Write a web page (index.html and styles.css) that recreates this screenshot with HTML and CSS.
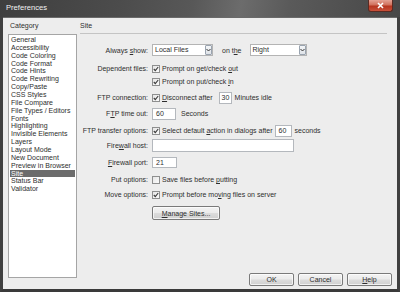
FILE: index.html
```html
<!DOCTYPE html>
<html>
<head>
<meta charset="utf-8">
<link rel="stylesheet" href="styles.css">
</head>
<body>
<div class="window">
  <div class="titlebar">
    <span class="title">Preferences</span>
    <span class="close"><svg width="9" height="7" viewBox="0 0 9 7"><path d="M2 1 L7 6 M7 1 L2 6" stroke="#fff" stroke-width="1.6" fill="none"/></svg></span>
  </div>
  <div class="client">
    <div class="left">
      <div class="caption">Category</div>
      <ul class="list">
        <li>General</li>
        <li>Accessibility</li>
        <li>Code Coloring</li>
        <li>Code Format</li>
        <li>Code Hints</li>
        <li>Code Rewriting</li>
        <li>Copy/Paste</li>
        <li>CSS Styles</li>
        <li>File Compare</li>
        <li>File Types / Editors</li>
        <li>Fonts</li>
        <li>Highlighting</li>
        <li>Invisible Elements</li>
        <li>Layers</li>
        <li>Layout Mode</li>
        <li>New Document</li>
        <li>Preview in Browser</li>
        <li class="selected">Site</li>
        <li>Status Bar</li>
        <li>Validator</li>
      </ul>
    </div>
    <div class="right">
      <div class="section-title">Site</div>
      <div class="form">
        <div class="row r1">
          <span class="label">Always <u>s</u>how:</span>
          <span class="select sel-local"><span class="sel-text">Local Files</span><span class="arrow"><svg width="5" height="4" viewBox="0 0 5 4"><path d="M0.5 1 L2.5 3 L4.5 1" stroke="#333" stroke-width="1" fill="none"/></svg></span></span>
          <span class="text on-the">on t<u>h</u>e</span>
          <span class="select sel-right"><span class="sel-text">Right</span><span class="arrow"><svg width="5" height="4" viewBox="0 0 5 4"><path d="M0.5 1 L2.5 3 L4.5 1" stroke="#333" stroke-width="1" fill="none"/></svg></span></span>
        </div>
        <div class="row r2">
          <span class="label">Dependent files:</span>
          <span class="cb"><svg width="6" height="6" viewBox="0 0 6 6"><path d="M0.8 3 L2.3 4.6 L5.2 1" stroke="#3a3a3a" stroke-width="1.1" fill="none"/></svg></span>
          <span class="text">Prompt on get/check <u>o</u>ut</span>
        </div>
        <div class="row r3">
          <span class="label"></span>
          <span class="cb"><svg width="6" height="6" viewBox="0 0 6 6"><path d="M0.8 3 L2.3 4.6 L5.2 1" stroke="#3a3a3a" stroke-width="1.1" fill="none"/></svg></span>
          <span class="text">Prompt on put/check <u>i</u>n</span>
        </div>
        <div class="row r4">
          <span class="label">FTP connection:</span>
          <span class="cb"><svg width="6" height="6" viewBox="0 0 6 6"><path d="M0.8 3 L2.3 4.6 L5.2 1" stroke="#3a3a3a" stroke-width="1.1" fill="none"/></svg></span>
          <span class="text"><u>D</u>isconnect after</span>
          <span class="input in-30">30</span>
          <span class="text after">Minutes idle</span>
        </div>
        <div class="row r5">
          <span class="label">F<u>T</u>P time out:</span>
          <span class="input in-timeout">60</span>
          <span class="text after-wide">Seconds</span>
        </div>
        <div class="row r6">
          <span class="label">FTP transfer options:</span>
          <span class="cb"><svg width="6" height="6" viewBox="0 0 6 6"><path d="M0.8 3 L2.3 4.6 L5.2 1" stroke="#3a3a3a" stroke-width="1.1" fill="none"/></svg></span>
          <span class="text">Select default <u>a</u>ction in dialogs after</span>
          <span class="input in-60">60</span>
          <span class="text after">seconds</span>
        </div>
        <div class="row r7">
          <span class="label">Fire<u>w</u>all host:</span>
          <span class="input in-host"></span>
        </div>
        <div class="row r8">
          <span class="label"><u>F</u>irewall port:</span>
          <span class="input in-port">21</span>
        </div>
        <div class="row r9">
          <span class="label">Put options:</span>
          <span class="cb"></span>
          <span class="text">Save files before <u>p</u>utting</span>
        </div>
        <div class="row r10">
          <span class="label">Move options:</span>
          <span class="cb"><svg width="6" height="6" viewBox="0 0 6 6"><path d="M0.8 3 L2.3 4.6 L5.2 1" stroke="#3a3a3a" stroke-width="1.1" fill="none"/></svg></span>
          <span class="text">Prompt before mo<u>v</u>ing files on server</span>
        </div>
        <div class="row r11">
          <span class="label"></span>
          <span class="btn manage"><u>M</u>anage Sites...</span>
        </div>
      </div>
      <div class="footer">
        <span class="btn">OK</span>
        <span class="btn">Cancel</span>
        <span class="btn"><u>H</u>elp</span>
      </div>
    </div>
  </div>
</div>
</body>
</html>
```

FILE: styles.css
```css
html, body {
  margin: 0;
  padding: 0;
}
body {
  width: 400px;
  height: 292px;
  overflow: hidden;
  font-family: "Liberation Sans", Arial, sans-serif;
  font-size: 7px;
  color: #2e2e2e;
}
.window {
  width: 400px;
  height: 292px;
  box-sizing: border-box;
  display: flex;
  flex-direction: column;
  background: #3c3c3c;
  border-left: 3px solid #404040;
  border-right: 3px solid #404040;
  border-bottom: 3px solid #3a3a3a;
}
.titlebar {
  height: 17px;
  margin: 0 -3px;
  display: flex;
  justify-content: space-between;
  align-items: flex-start;
  background: linear-gradient(100deg, #3e3e3e 0%, #4c4c4c 30%, #585858 48%, #6c6c6c 60%, #5a5a5a 72%, #474747 100%);
}
.title {
  margin: 3px 0 0 6px;
  font-size: 7.6px;
  color: #f2f2f2;
  line-height: 10px;
}
.close {
  margin-right: 7px;
  width: 25px;
  height: 12px;
  box-sizing: border-box;
  display: flex;
  align-items: center;
  justify-content: center;
  border: 1px solid #5a2a22;
  border-top: none;
  border-radius: 0 0 3px 3px;
  background: linear-gradient(#e4a294 0%, #d0705c 45%, #b6351f 55%, #c8503a 100%);
}
.client {
  flex: 1;
  display: flex;
  background: #ededed;
  border-top: 1px solid #6a6a6a;
  min-height: 0;
}
.left {
  display: flex;
  flex-direction: column;
  padding: 4px 0 11px 5px;
}
.caption {
  line-height: 8px;
  height: 8px;
  margin-left: 2px;
  margin-bottom: 4px;
}
.list {
  flex: 1;
  width: 69px;
  box-sizing: border-box;
  margin: 0;
  padding: 1px;
  list-style: none;
  background: #fff;
  border: 1px solid #a5a5a5;
}
.list li {
  height: 7.86px;
  line-height: 7.86px;
  padding-left: 1px;
  white-space: nowrap;
}
.list li.selected {
  background: #6c6c6c;
  color: #fff;
}
.right {
  flex: 1;
  display: flex;
  flex-direction: column;
  padding: 4px 5px 3px 3px;
}
.section-title {
  height: 8px;
  line-height: 8px;
  padding-bottom: 3px;
  border-bottom: 1px solid #c4c4c4;
  margin-right: 5px;
}
.form {
  display: flex;
  flex-direction: column;
}
.row {
  display: flex;
  align-items: center;
  height: 13px;
}
.label {
  width: 68px;
  text-align: right;
  margin-right: 4px;
  white-space: nowrap;
}
.text {
  white-space: nowrap;
}
.r1 { margin-top: 10px; height: 12px; }
.r2 { margin-top: 6px; }
.r3 { margin-top: 0; }
.r4 { margin-top: 3px; }
.r5 { margin-top: 3px; }
.r6 { margin-top: 4px; }
.r7 { margin-top: 2px; }
.r8 { margin-top: 4px; }
.r9 { margin-top: 4px; }
.r10 { margin-top: 2px; }
.r11 { margin-top: 5px; height: 14px; }

.select {
  display: flex;
  height: 12px;
  box-sizing: border-box;
  background: #fff;
  border: 1px solid #b4b4b4;
  align-items: stretch;
}
.sel-local { width: 61px; }
.sel-right { width: 57px; margin-left: 8px; }
.on-the { margin-left: 9px; }
.sel-text {
  flex: 1;
  padding-left: 2px;
  line-height: 10px;
  white-space: nowrap;
}
.arrow {
  width: 7px;
  box-sizing: border-box;
  display: flex;
  align-items: center;
  justify-content: center;
  border: 1px solid #9aa4b0;
  border-radius: 1px;
  background: linear-gradient(#f4f6f8, #dfe3e8);
}
.cb {
  width: 8px;
  height: 8px;
  box-sizing: border-box;
  border: 1px solid #8e8f8f;
  background: linear-gradient(135deg, #e6e6e6, #fbfbfb);
  margin-right: 2px;
  display: flex;
  align-items: center;
  justify-content: center;
}
.input {
  height: 12px;
  box-sizing: border-box;
  background: #fff;
  border: 1px solid #b4b8bd;
  padding-left: 3px;
  line-height: 10px;
}
.in-30 { width: 13px; margin-left: 6px; padding-left: 2px; }
.in-timeout { width: 24px; }
.in-60 { width: 17px; margin-left: 2px; }
.in-host { width: 142px; height: 13px; }
.in-port { width: 25px; height: 11px; line-height: 9px; }
.after { margin-left: 3px; }
.after-wide { margin-left: 5px; }

.btn {
  display: flex;
  align-items: center;
  justify-content: center;
  box-sizing: border-box;
  height: 13px;
  width: 45px;
  border: 1px solid #7a7a7a;
  border-radius: 2px;
  background: linear-gradient(#f3f3f3 0%, #ebebeb 48%, #dcdcdc 52%, #cfcfcf 100%);
  box-shadow: inset 0 0 0 1px rgba(255,255,255,0.7);
  white-space: nowrap;
}
.manage {
  width: 68px;
  height: 14px;
}
.footer {
  margin-top: auto;
  display: flex;
  justify-content: flex-end;
  gap: 4px;
}
```
